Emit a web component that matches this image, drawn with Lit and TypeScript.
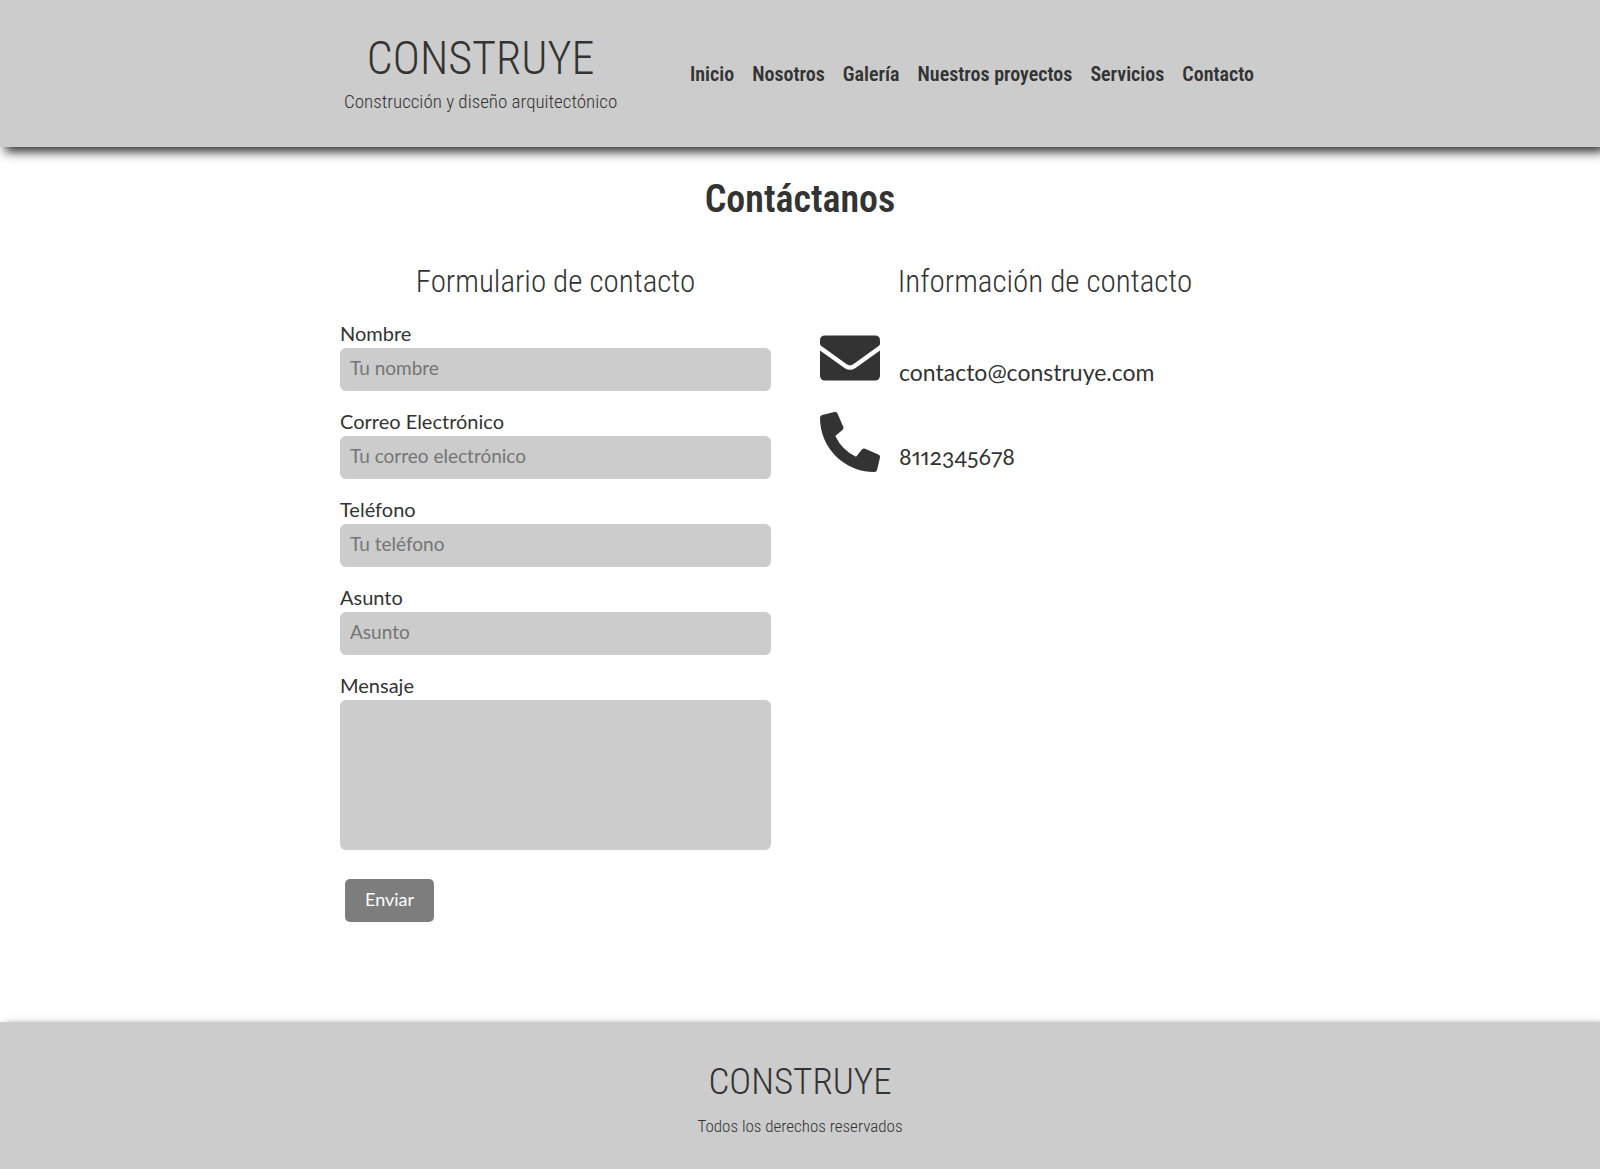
import { LitElement, html, svg, css } from "lit";
import { customElement } from "lit/decorators.js";

const NAV = [
  "Inicio",
  "Nosotros",
  "Galería",
  "Nuestros proyectos",
  "Servicios",
  "Contacto",
];

const FIELDS = [
  { id: "nombre", label: "Nombre", type: "text", placeholder: "Tu nombre" },
  { id: "correo", label: "Correo Electrónico", type: "email", placeholder: "Tu correo electrónico" },
  { id: "telefono", label: "Teléfono", type: "tel", placeholder: "Tu teléfono" },
  { id: "asunto", label: "Asunto", type: "text", placeholder: "Asunto" },
];

const ENVELOPE = svg`
  <path d="M40 64H472A40 40 0 0 1 512 104V134Q512 144 503 151L284 310Q256 328 228 310L9 151Q0 144 0 134V104A40 40 0 0 1 40 64Z"/>
  <path d="M0 192L212 344Q256 370 300 344L512 192V408A40 40 0 0 1 472 448H40A40 40 0 0 1 0 408Z"/>`;

const PHONE = svg`
  <path d="M497.39 361.8l-112-48a24 24 0 0 0-28 6.9l-49.6 60.6A370.66 370.66 0 0 1 130.6 204.11l60.6-49.6a23.94 23.94 0 0 0 6.9-28l-48-112A24.16 24.16 0 0 0 122.6.61l-104 24A24 24 0 0 0 0 48c0 256.5 207.9 464 464 464a24 24 0 0 0 23.4-18.6l24-104a24.29 24.29 0 0 0-14.01-27.6z"/>`;

@customElement("app-root")
export class AppRoot extends LitElement {
  static styles = css`
    :host {
      display: block;
      background: #fff;
      color: #333;
      font-family: Lato, "Liberation Sans", sans-serif;
      --display: "Roboto Condensed", "Liberation Sans", sans-serif;
    }
    * {
      box-sizing: border-box;
    }
    p, h1, h2, ul {
      margin: 0;
      padding: 0;
    }
    a {
      color: inherit;
      text-decoration: none;
    }
    .header, .footer {
      background: #ccc;
      font-family: var(--display);
      font-weight: 300;
      box-shadow: 5px 5px 10px #333;
    }
    .header {
      padding: 29px 0 30px;
    }
    .container {
      max-width: 960px;
      margin: 0 auto;
    }
    .bar {
      display: flex;
      flex-wrap: wrap;
      align-items: center;
      justify-content: space-between;
      padding: 0 26px 0 24px;
    }
    .brand {
      text-align: center;
    }
    .name {
      font-size: 46px;
      line-height: 58px;
    }
    .tagline {
      font-size: 19px;
      font-weight: 350;
      line-height: 30px;
    }
    .nav {
      display: flex;
      flex-wrap: wrap;
      gap: 18px;
      padding-top: 2px;
      list-style: none;
      font-size: 20px;
      font-weight: 600;
      line-height: 24px;
    }
    .main {
      padding: 29px 10px 100px 20px;
    }
    .title {
      margin-right: -10px;
      margin-left: -20px;
      margin-bottom: 40px;
      text-align: center;
      font-family: var(--display);
      font-size: 38px;
      font-weight: 600;
      line-height: 46px;
    }
    .columns {
      display: grid;
      grid-template-columns: 431fr 450fr;
      gap: 49px;
    }
    .subtitle {
      margin-bottom: 16px;
      text-align: center;
      font-family: var(--display);
      font-size: 31px;
      font-weight: 300;
      line-height: 40px;
    }
    .field {
      margin-bottom: 15px;
    }
    .label {
      display: block;
      font-size: 20px;
      line-height: 30px;
    }
    .input {
      display: block;
      width: 100%;
      margin: 0;
      padding: 9px 10px 12px;
      border: 0;
      border-radius: 6px;
      background: #ccc;
      color: #333;
      font: 19px/22px Lato, "Liberation Sans", sans-serif;
    }
    .input::placeholder {
      color: #757575;
    }
    .message {
      height: 150px;
      resize: none;
    }
    .send {
      display: block;
      margin: 29px 5px 0;
      padding: 9px 20px 12px;
      border: 0;
      border-radius: 5px;
      background: #7d7d7d;
      color: #fff;
      font: 18px/22px Lato, "Liberation Sans", sans-serif;
    }
    .contacts {
      display: grid;
      gap: 24px;
      padding-top: 10px;
      list-style: none;
      font-size: 23px;
      line-height: 32px;
      font-variant-numeric: oldstyle-nums proportional-nums;
    }
    .contact {
      display: flex;
      align-items: flex-end;
      gap: 19px;
    }
    .icon {
      flex: none;
      width: 60px;
      height: 60px;
      fill: #333;
    }
    .footer {
      padding: 37px 20px 31px;
      text-align: center;
    }
    .footer-name {
      margin-bottom: 9px;
      font-size: 37px;
      line-height: 46px;
    }
    .rights {
      font-size: 17px;
      font-weight: 350;
      line-height: 24px;
    }
    @media (max-width: 760px) {
      .columns {
        grid-template-columns: 1fr;
      }
      .bar {
        justify-content: center;
      }
    }
  `;

  render() {
    return html`
      <header class="header">
        <div class="container bar">
          <a class="brand" href="#inicio">
            <p class="name">CONSTRUYE</p>
            <p class="tagline">Construcción y diseño arquitectónico</p>
          </a>
          <nav>
            <ul class="nav">
              ${NAV.map((item) => html`<li><a href="#">${item}</a></li>`)}
            </ul>
          </nav>
        </div>
      </header>
      <main class="main container">
        <h1 class="title">Contáctanos</h1>
        <div class="columns">
          <section>
            <h2 class="subtitle">Formulario de contacto</h2>
            <form @submit=${(e: Event) => e.preventDefault()}>
              ${FIELDS.map(
                (f) => html`<div class="field">
                  <label class="label" for=${f.id}>${f.label}</label>
                  <input class="input" id=${f.id} name=${f.id} type=${f.type} placeholder=${f.placeholder} />
                </div>`
              )}
              <label class="label" for="mensaje">Mensaje</label>
              <textarea class="input message" id="mensaje" name="mensaje"></textarea>
              <button class="send" type="submit">Enviar</button>
            </form>
          </section>
          <section>
            <h2 class="subtitle">Información de contacto</h2>
            <ul class="contacts">
              <li class="contact">
                <svg class="icon" viewBox="0 0 512 512" aria-hidden="true">${ENVELOPE}</svg>
                <a href="mailto:contacto@construye.com">contacto@construye.com</a>
              </li>
              <li class="contact">
                <svg class="icon" viewBox="0 0 512 512" aria-hidden="true">${PHONE}</svg>
                <a href="tel:8112345678">8112345678</a>
              </li>
            </ul>
          </section>
        </div>
      </main>
      <footer class="footer">
        <p class="footer-name">CONSTRUYE</p>
        <p class="rights">Todos los derechos reservados</p>
      </footer>
    `;
  }
}
